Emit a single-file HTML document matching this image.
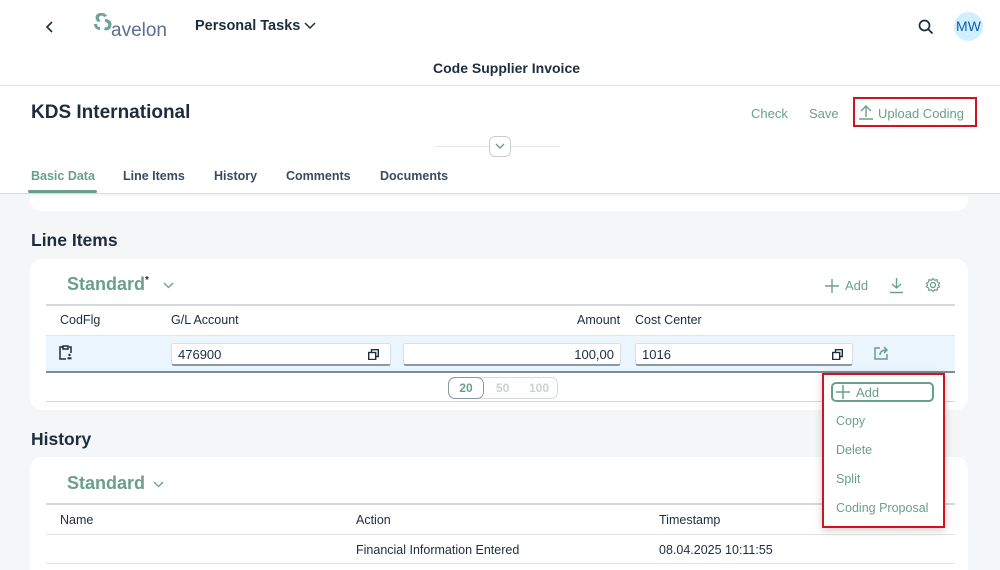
<!DOCTYPE html>
<html><head><meta charset="utf-8"><style>
*{box-sizing:border-box;margin:0;padding:0}
html,body{width:1000px;height:570px;overflow:hidden}
body{background:#f5f6f7;font-family:"Liberation Sans",sans-serif;color:#1d2d3e;position:relative}
.a{position:absolute}
.g{color:#6a9f8d}
.b{font-weight:bold}
.inp{position:absolute;height:23px;background:#fff;border:1px solid #d9dee3;border-bottom:2px solid #8b98a5;border-radius:3px;font-size:13px;padding:3px 6px}
.cp{position:absolute;width:11px;height:11px}
</style></head><body>
<div class="a" style="left:0;top:0;width:1000px;height:194px;background:#fff;border-bottom:1px solid #d9dcdf"></div>
<div class="a" style="left:0;top:85px;width:1000px;height:1px;background:#dfe2e5"></div>
<svg class="a" style="left:45px;top:20px" width="10" height="14"><path d="M7 2 L2 7 L7 12" fill="none" stroke="#1d2d3e" stroke-width="1.6"/></svg>
<svg class="a" style="left:92px;top:11px" width="24" height="22"><path d="M6 11 C2 8 3 2 9 2 C12 2 14 3 15 5 L12 6 C11 4 7 4 7 7 C7 9 9 10 9 10Z" fill="#6aa696"/><path d="M13 8 C17 8 21 11 19 16 C18 19 15 20 12 19 L13 16 C15 17 17 15 16 13 C15 11 13 11 13 11Z" fill="#6aa696"/><path d="M2 13 C2 16 4 19 8 19 L8 16 C6 16 5 15 5 13Z" fill="#6aa696"/></svg>
<div class="a" style="left:111px;top:20px;font-size:19px;color:#5b6f8f">avelon</div>
<div class="a b" style="left:195px;top:18px;font-size:14.5px">Personal Tasks</div>
<svg class="a" style="left:304px;top:22px" width="12" height="8"><path d="M1 1 L6 6 L11 1" fill="none" stroke="#1d2d3e" stroke-width="1.5"/></svg>
<svg class="a" style="left:918px;top:19px" width="16" height="16"><circle cx="6.5" cy="6.5" r="5" fill="none" stroke="#1d2d3e" stroke-width="1.7"/><path d="M10 10 L14.5 14.5" stroke="#1d2d3e" stroke-width="1.8"/></svg>
<div class="a" style="left:954px;top:12px;width:29px;height:29px;border-radius:50%;background:#d1effe;color:#0a5fb4;font-size:14px;text-align:center;line-height:29px">MW</div>
<div class="a b" style="left:0;top:60px;width:1013px;text-align:center;font-size:14px">Code Supplier Invoice</div>
<div class="a b" style="left:31px;top:102px;font-size:19px">KDS International</div>
<div class="a g" style="left:751px;top:106px;font-size:13px">Check</div>
<div class="a g" style="left:809px;top:106px;font-size:13px">Save</div>
<div class="a" style="left:853px;top:97px;width:124px;height:30px;border:2px solid #d2121e"></div>
<svg class="a" style="left:858px;top:104px" width="16" height="16"><path d="M8 13 V2 M3 7 L8 2 L13 7 M1 15 H15" fill="none" stroke="#6a9f8d" stroke-width="1.4"/></svg>
<div class="a g" style="left:878px;top:106px;font-size:13px">Upload Coding</div>
<div class="a" style="left:436px;top:146px;width:124px;height:1px;background:#e3e6e9"></div>
<div class="a" style="left:489px;top:136px;width:22px;height:21px;background:#fff;border:1px solid #c9cdd1;border-radius:6px"></div>
<svg class="a" style="left:494px;top:143px" width="12" height="8"><path d="M2 1 L6 5 L10 1" fill="none" stroke="#6a9f8d" stroke-width="1.4"/></svg>
<div class="a b" style="left:31px;top:169px;font-size:12.5px;color:#6a9f8d">Basic Data</div>
<div class="a" style="left:28px;top:190px;width:69px;height:3px;background:#6a9f8d;border-radius:2px"></div>
<div class="a b" style="left:123px;top:169px;font-size:12.5px;color:#3a4b5e">Line Items</div>
<div class="a b" style="left:214px;top:169px;font-size:12.5px;color:#3a4b5e">History</div>
<div class="a b" style="left:286px;top:169px;font-size:12.5px;color:#3a4b5e">Comments</div>
<div class="a b" style="left:380px;top:169px;font-size:12.5px;color:#3a4b5e">Documents</div>
<div class="a" style="left:30px;top:196px;width:938px;height:15px;background:#fff;border-radius:0 0 12px 12px"></div>
<div class="a" style="left:31px;top:230px;font-size:17.5px;font-weight:bold">Line Items</div>
<div class="a" style="left:30px;top:259px;width:938px;height:151px;background:#fff;border-radius:12px"></div>
<div class="a b g" style="left:67px;top:274px;font-size:18px">Standard<sup style="font-size:10px;color:#1d2d3e">*</sup></div>
<svg class="a" style="left:163px;top:282px" width="11" height="7"><path d="M1 1 L5.5 5.5 L10 1" fill="none" stroke="#6a9f8d" stroke-width="1.3"/></svg>
<svg class="a" style="left:825px;top:279px" width="14" height="14"><path d="M7 0 V14 M0 7 H14" stroke="#6a9f8d" stroke-width="1.4"/></svg>
<div class="a g" style="left:845px;top:278px;font-size:13px">Add</div>
<svg class="a" style="left:889px;top:277px" width="15" height="17"><path d="M7.5 1 V11 M3 7 L7.5 11 L12 7 M1 15.5 H14" fill="none" stroke="#6a9f8d" stroke-width="1.4"/></svg>
<svg class="a" style="left:925px;top:277px" width="16" height="16"><circle cx="8" cy="8" r="2.5" fill="none" stroke="#6a9f8d" stroke-width="1.3"/><path d="M8 1.5 L9.6 3.3 L12 2.6 L12.4 5 L14.6 6.2 L13.4 8 L14.6 9.8 L12.4 11 L12 13.4 L9.6 12.7 L8 14.5 L6.4 12.7 L4 13.4 L3.6 11 L1.4 9.8 L2.6 8 L1.4 6.2 L3.6 5 L4 2.6 L6.4 3.3Z" fill="none" stroke="#6a9f8d" stroke-width="1.2"/></svg>
<div class="a" style="left:46px;top:304px;width:909px;height:2px;background:#d5d9dc"></div>
<div class="a" style="left:60px;top:313px;font-size:12.5px">CodFlg</div>
<div class="a" style="left:171px;top:313px;font-size:12.5px">G/L Account</div>
<div class="a" style="left:577px;top:313px;font-size:12.5px">Amount</div>
<div class="a" style="left:635px;top:313px;font-size:12.5px">Cost Center</div>
<div class="a" style="left:46px;top:335px;width:909px;height:38px;background:#ebf5fd;border-top:1px solid #e1e4e7;border-bottom:2px solid #7c8c98"></div>
<svg class="a" style="left:58px;top:344px" width="16" height="17"><path d="M5 3 H2 V15 H8 M11 3 H13 V9 M5 2 H10 V5 H5Z" fill="none" stroke="#1d2d3e" stroke-width="1.5"/><circle cx="11.5" cy="11" r="1.2" fill="#1d2d3e"/><rect x="9.5" y="13.3" width="4" height="2" fill="#1d2d3e"/></svg>
<div class="inp" style="left:171px;top:343px;width:220px">476900</div>
<svg class="cp" style="left:368px;top:349px"><rect x="0.7" y="3.5" width="7" height="7" fill="none" stroke="#1d2d3e" stroke-width="1.4"/><path d="M3.5 3 V0.7 H10.3 V7.5 H8" fill="none" stroke="#1d2d3e" stroke-width="1.4"/></svg>
<div class="inp" style="left:403px;top:343px;width:218px;text-align:right">100,00</div>
<div class="inp" style="left:635px;top:343px;width:218px">1016</div>
<svg class="cp" style="left:832px;top:349px"><rect x="0.7" y="3.5" width="7" height="7" fill="none" stroke="#1d2d3e" stroke-width="1.4"/><path d="M3.5 3 V0.7 H10.3 V7.5 H8" fill="none" stroke="#1d2d3e" stroke-width="1.4"/></svg>
<svg class="a" style="left:873px;top:345px" width="17" height="16"><path d="M7 3 H2 V14 H14 V9" fill="none" stroke="#6a9f8d" stroke-width="1.5"/><path d="M7 10 C7 6 10 5 14 5 M11 2 L14 5 L11 8" fill="none" stroke="#6a9f8d" stroke-width="1.5"/></svg>
<div class="a" style="left:448px;top:377px;width:110px;height:22px;border:1px solid #d5d9dc;border-radius:7px"></div>
<div class="a b" style="left:448px;top:377px;width:36px;height:22px;border:1px solid #8b98a5;border-radius:7px;font-size:12px;color:#6a9f8d;text-align:center;line-height:20px">20</div>
<div class="a b" style="left:496px;top:381px;font-size:12px;color:#c6d4cf">50</div>
<div class="a b" style="left:529px;top:381px;font-size:12px;color:#c6d4cf">100</div>
<div class="a" style="left:46px;top:401px;width:909px;height:1px;background:#d5d9dc"></div>
<div class="a" style="left:31px;top:429px;font-size:17.5px;font-weight:bold">History</div>
<div class="a" style="left:30px;top:457px;width:938px;height:113px;background:#fff;border-radius:12px 12px 0 0"></div>
<div class="a b g" style="left:67px;top:473px;font-size:18px">Standard</div>
<svg class="a" style="left:153px;top:481px" width="11" height="7"><path d="M1 1 L5.5 5.5 L10 1" fill="none" stroke="#6a9f8d" stroke-width="1.3"/></svg>
<div class="a" style="left:46px;top:503px;width:909px;height:2px;background:#d5d9dc"></div>
<div class="a" style="left:60px;top:513px;font-size:12.5px">Name</div>
<div class="a" style="left:356px;top:513px;font-size:12.5px">Action</div>
<div class="a" style="left:659px;top:513px;font-size:12.5px">Timestamp</div>
<div class="a" style="left:46px;top:534px;width:909px;height:1px;background:#e1e4e7"></div>
<div class="a" style="left:356px;top:543px;font-size:12.5px">Financial Information Entered</div>
<div class="a" style="left:659px;top:543px;font-size:12.5px">08.04.2025 10:11:55</div>
<div class="a" style="left:46px;top:563px;width:909px;height:1px;background:#e1e4e7"></div>
<div class="a" style="left:822px;top:373px;width:123px;height:155px;background:#fff;border:2px solid #d2121e;box-shadow:0 2px 8px rgba(0,0,0,.2)"></div>
<div class="a" style="left:831px;top:382px;width:103px;height:20px;border:2px solid #6a9f8d;border-radius:5px"></div>
<svg class="a" style="left:836px;top:385px" width="14" height="14"><path d="M7 0 V14 M0 7 H14" stroke="#6a9f8d" stroke-width="1.5"/></svg>
<div class="a g" style="left:856px;top:385px;font-size:13px">Add</div>
<div class="a g" style="left:836px;top:414px;font-size:12.5px">Copy</div>
<div class="a g" style="left:836px;top:443px;font-size:12.5px">Delete</div>
<div class="a g" style="left:836px;top:472px;font-size:12.5px">Split</div>
<div class="a g" style="left:836px;top:501px;font-size:12.5px">Coding Proposal</div>
</body></html>
